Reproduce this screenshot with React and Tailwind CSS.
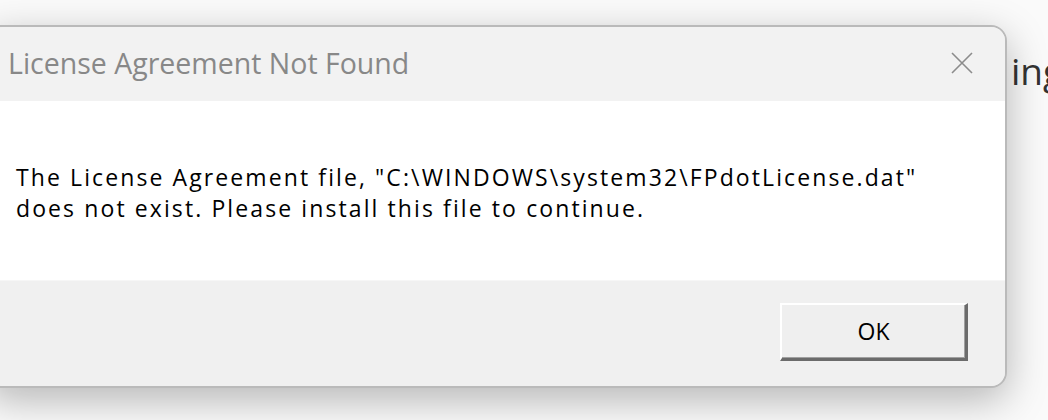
export default function App() {
  return (
    <div className="w-[1048px] h-[420px] overflow-hidden bg-[#fafafa] relative">
      <div className="flex items-start pt-[25px]">
        <div className="ml-[-14px] w-[1021px] h-[363px] shrink-0 flex flex-col rounded-[16px] border-2 border-[#bababa] bg-[#f0f0f0] overflow-hidden shadow-[0_12px_40px_rgba(0,0,0,0.28)] relative z-10">
          <div className="h-[74px] shrink-0 bg-[#f2f2f2] flex items-center justify-between pl-[20px] pr-[32px]">
            <span className="text-[28.5px] text-[#888888] pb-[2px]" style={{ fontFamily: '"Open Sans", sans-serif' }}>
              License Agreement Not Found
            </span>
            <svg width="22" height="22" viewBox="0 0 22 22" className="mb-[2px]">
              <path d="M1 1 L21 21 M21 1 L1 21" stroke="#8c8c8c" strokeWidth="1.6" fill="none" />
            </svg>
          </div>
          <div className="h-[180px] shrink-0 bg-white border-b border-[#f6f6f6] pl-[28px] pt-[61px] text-[23px] leading-[31px] tracking-[2.1px] font-medium text-black" style={{ fontFamily: '"Open Sans", sans-serif' }}>
            <div className="whitespace-nowrap">The License Agreement file, "C:\WINDOWS\system32\FPdotLicense.dat"</div>
            <div className="whitespace-nowrap">does not exist. Please install this file to continue.</div>
          </div>
          <div className="flex-1 bg-[#f0f0f0] flex justify-end items-start pt-[22px] pr-[37px]">
            <button className="w-[188px] h-[58px] bg-[#efefef] border-t-2 border-l-2 border-t-white border-l-white border-b-[3px] border-r-[3px] border-b-[#6b6b6b] border-r-[#6b6b6b] shadow-[inset_-1px_-1px_0_#a0a0a0] text-[23px] font-medium text-black flex items-center justify-center" style={{ fontFamily: '"Open Sans", sans-serif' }}>
              OK
            </button>
          </div>
        </div>
        <span className="ml-[4px] mt-[18px] text-[37px] text-[#333333] whitespace-nowrap" style={{ fontFamily: '"Open Sans", sans-serif' }}>
          ing
        </span>
      </div>
    </div>
  );
}
